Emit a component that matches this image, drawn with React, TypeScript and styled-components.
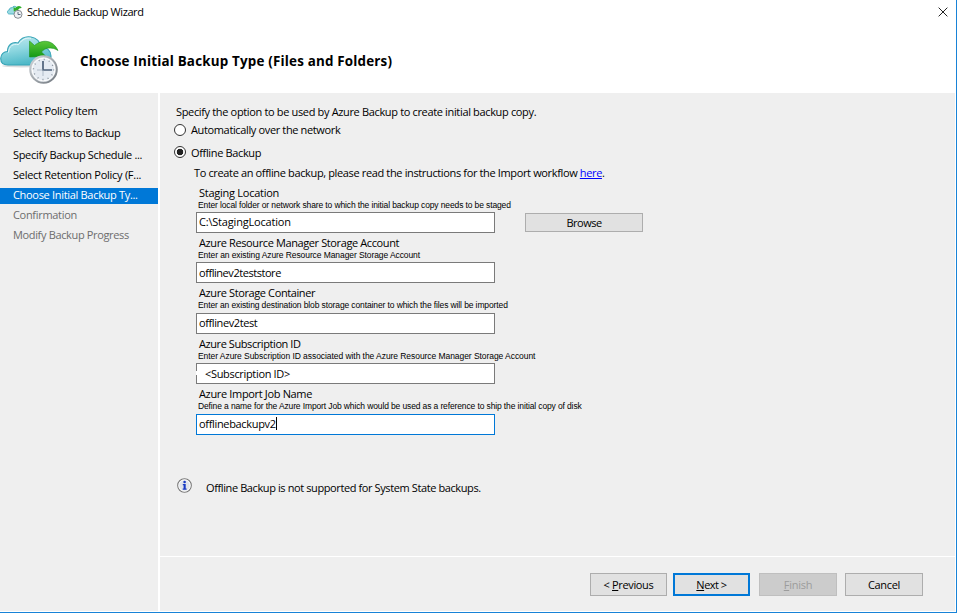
import React from 'react';
import styled, { createGlobalStyle, css } from 'styled-components';

const GlobalStyle = createGlobalStyle`
  * { box-sizing: border-box; }
  body {
    margin: 0;
    background: #fff;
    color: #000;
    font-family: "Open Sans", "Noto Sans", sans-serif;
    font-size: 11px;
    overflow: hidden;
  }
`;

const Window = styled.div`
  width: 957px;
  height: 613px;
  display: flex;
  flex-direction: column;
  background: #fff;
  border-right: 1px solid #1883d7;
  border-bottom: 1px solid #1883d7;
`;

const TitleBar = styled.header`
  height: 26px;
  flex: none;
  display: flex;
  align-items: center;
  padding: 0 8px 2px 7px;
`;

const WindowTitle = styled.span<{ $ls: number }>`
  margin-left: 4px;
  padding-bottom: 1px;
  flex: 1;
  letter-spacing: ${(p) => p.$ls}px;
`;

const Banner = styled.div`
  height: 67px;
  flex: none;
  display: flex;
  align-items: flex-start;
  padding-top: 9px;
`;

const Heading = styled.h1<{ $ls: number }>`
  margin: 16px 0 0 20px;
  font-size: 13.4px;
  line-height: 20px;
  font-weight: 700;
  letter-spacing: ${(p) => p.$ls}px;
`;

const Body = styled.div`
  flex: 1;
  min-height: 0;
  display: flex;
  gap: 2px;
  padding: 0 1px 1px 0;
`;

const Sidebar = styled.nav`
  width: 158px;
  flex: none;
  padding-top: 6px;
  background: #efefef;
`;

const Step = styled.div<{ $h: number; $ls: number; $state?: 'active' | 'pending' }>`
  height: ${(p) => p.$h}px;
  display: flex;
  align-items: center;
  padding-left: 13px;
  white-space: nowrap;
  letter-spacing: ${(p) => p.$ls}px;
  ${(p) => p.$state === 'pending' && css`color: #6d6d6d;`}
  ${(p) => p.$state === 'active' && css`
    margin: 4px 0 0;
    padding-bottom: 3px;
    background: #0078d7;
    color: #fff;
  `}
`;

const Main = styled.main`
  flex: 1;
  display: flex;
  flex-direction: column;
  background: #efefef;
`;

const Content = styled.section`
  height: 464px;
  flex: none;
  padding: 8px 0 0 14px;
  border-bottom: 1px solid #fff;
`;

const Line = styled.div<{ $h: number; $indent?: number; $ls: number }>`
  height: ${(p) => p.$h}px;
  display: flex;
  align-items: center;
  padding-left: ${(p) => p.$indent ?? 0}px;
  white-space: pre;
  letter-spacing: ${(p) => p.$ls}px;
`;

const Radio = styled.span<{ $on?: boolean }>`
  width: 12px;
  height: 12px;
  flex: none;
  margin-right: 5px;
  border: 1px solid #333;
  border-radius: 50%;
  background: ${(p) => (p.$on ? 'radial-gradient(circle, #222 3px, #fff 3.6px)' : '#fff')};
`;

const Link = styled.a`
  color: #0000ff;
  text-decoration: underline;
`;

const Fields = styled.div`
  padding: 6.7px 0 0 22px;
`;

const Field = styled.div`
  height: 50.4px;
`;

const Label = styled.label<{ $ls: number }>`
  display: block;
  padding-left: 3px;
  line-height: 15px;
  letter-spacing: ${(p) => p.$ls}px;
`;

const Hint = styled.div<{ $ls: number }>`
  padding-left: 2px;
  height: 12.3px;
  line-height: 10px;
  font-family: "Liberation Sans", Arial, sans-serif;
  font-size: 8.5px;
  white-space: nowrap;
  letter-spacing: ${(p) => p.$ls}px;
`;

const FieldRow = styled.div`
  display: flex;
  align-items: flex-start;
  gap: 30px;
`;

const TextBox = styled.div<{ $ls: number; $focus?: boolean; $masked?: boolean }>`
  position: relative;
  width: 299px;
  height: 21px;
  display: flex;
  align-items: center;
  padding: 0 0 1px ${(p) => (p.$masked ? 8 : 2)}px;
  background: #fff;
  border: 1px solid ${(p) => (p.$focus ? '#0078d7' : '#7a7a7a')};
  letter-spacing: ${(p) => p.$ls}px;
  ${(p) => p.$masked && css`
    &::before {
      content: '';
      position: absolute;
      left: -1px;
      top: 7px;
      width: 1px;
      height: 4px;
      background: #fff;
    }
  `}
`;

const Caret = styled.span`
  width: 1px;
  height: 13px;
  background: #000;
`;

const Button = styled.button<{ $w: number; $h: number; $ls: number; $primary?: boolean }>`
  width: ${(p) => p.$w}px;
  height: ${(p) => p.$h}px;
  padding: 0;
  font: inherit;
  letter-spacing: ${(p) => p.$ls}px;
  color: #000;
  background: #e1e1e1;
  border: ${(p) => (p.$primary ? '2px solid #0078d7' : '1px solid #adadad')};
  &:disabled {
    color: #9c9c9c;
    background: #cccccc;
    border-color: #bfbfbf;
  }
`;

const BrowseButton = styled(Button)`
  margin-top: 1px;
`;

const Notice = styled.div<{ $ls: number }>`
  display: flex;
  align-items: center;
  gap: 14px;
  height: 20px;
  margin-top: 39px;
  padding-left: 3px;
  letter-spacing: ${(p) => p.$ls}px;
`;

const NoticeText = styled.span`
  padding-top: 3px;
`;

const Footer = styled.footer`
  flex: 1;
  display: flex;
  justify-content: flex-end;
  align-items: flex-start;
  padding: 16px 32px 0 0;
`;

const Buttons = styled.div`
  display: grid;
  grid-template-columns: 83px 86px 86px 78px;
`;

const BackupIcon = ({ w, h, id }: { w: number; h: number; id: string }) => (
  <svg width={w} height={h} viewBox="0 0 60 50" fill="none" preserveAspectRatio="none">
    <defs>
      <linearGradient id={`${id}c`} x1="0" y1="0" x2="0.3" y2="1">
        <stop offset="0" stopColor="#c4eaf0" />
        <stop offset="0.5" stopColor="#8ed7e0" />
        <stop offset="1" stopColor="#4fb9c8" />
      </linearGradient>
      <linearGradient id={`${id}g`} x1="0" y1="0" x2="0" y2="1">
        <stop offset="0" stopColor="#5cc83a" />
        <stop offset="1" stopColor="#159a16" />
      </linearGradient>
      <linearGradient id={`${id}r`} x1="0" y1="0" x2="1" y2="1">
        <stop offset="0" stopColor="#d4d8dc" />
        <stop offset="1" stopColor="#6f767d" />
      </linearGradient>
    </defs>
    <ellipse cx="22" cy="31" rx="20" ry="1.5" fill="#d8dcde" />
    <path
      d="M8 30C3 30 .7 27 .7 23.500C.7 19 4 16.500 7.500 16.500C7.500 10 12 6.500 18 8C21 3 26 1.200 31 2C37 3 40 7 41 12C47 12 51 16 51 21C51 27 47 30 42 30Z"
      fill={`url(#${id}c)`}
      stroke="#35a3b6"
      strokeWidth="1.1"
    />
    <path d="M8.500 17.500C9 11 13 8.500 18.500 9.500C22 4 27 2.500 31 3.300" stroke="#e5f7fa" strokeWidth="1" />
    <path
      d="M29.500 6L34.500 10.500C42 4 53 4.500 58 15.500C52 11.500 44.500 12.500 41.500 17L46 21.500L29.500 22Z"
      fill={`url(#${id}g)`}
      stroke="#1b8f1b"
      strokeWidth="0.6"
    />
    <circle cx="43.500" cy="34.500" r="13.300" fill="#e3e8ed" stroke={`url(#${id}r)`} strokeWidth="2" />
    <circle cx="43.500" cy="34.500" r="11.300" fill="#e5ebf2" stroke="#fff" strokeWidth="1" />
    <circle cx="43.500" cy="34.500" r="10" stroke="#7f8994" strokeWidth="1.400" strokeDasharray="0.9 4.336" />
    <path d="M43 26V35H52" stroke="#4d6179" strokeWidth="1.700" />
    <path d="M43 35V41M37 35H43" stroke="#9aa8b7" strokeWidth="0.700" />
  </svg>
);

/* Simplified drawing of the cloud and clock for the 16px title bar slot. */
const SmallBackupIcon = () => (
  <svg width="16" height="14" viewBox="0 0 16 14" fill="none">
    <path
      d="M2.500 9C1 9 .5 8 .5 7C.5 5.700 1.300 5 2.300 5C2.300 3.300 3.500 2.500 5 2.800C6 1 8.500 .8 9.800 2.500L11 9Z"
      fill="#9bdbe3"
      stroke="#4aafbf"
      strokeWidth="0.9"
    />
    <path d="M6.500 2L8.300 3.200C10.500 .3 13.500 .2 14.800 3C13 2.800 11.800 3.500 11 5L12 6.200L6.800 6.500Z" fill="#2fae2a" />
    <circle cx="11" cy="9.300" r="4" fill="#eef1f4" stroke="#858b91" strokeWidth="1" />
    <path d="M11 6.800V9.500H13.500" stroke="#4d6179" strokeWidth="0.9" />
  </svg>
);

const CloseIcon = () => (
  <svg width="10" height="10" viewBox="0 0 11 11">
    <path d="M.7 .7L10.300 10.300M10.300 .7L.7 10.300" stroke="#222" strokeWidth="1.100" />
  </svg>
);

const InfoIcon = () => (
  <svg width="15" height="15" viewBox="0 0 15 15">
    <circle cx="7.500" cy="7.500" r="6.800" fill="#f5f5f5" stroke="#777" strokeWidth="1.100" />
    <circle cx="7.500" cy="7.500" r="5.600" fill="#dfe3ea" stroke="#fff" strokeWidth="0.700" />
    <circle cx="7.600" cy="4" r="1.300" fill="#1739c4" />
    <path d="M5.800 6.100H8.700V10.500H9.600V11.700H5.700V10.500H6.600V7.200H5.800Z" fill="#1739c4" />
  </svg>
);

interface FieldSpec {
  label: string;
  labelLs: number;
  hint: string;
  hintLs: number;
  value: string;
  valueLs: number;
  masked?: boolean;
  focus?: boolean;
  browse?: boolean;
}

const fields: FieldSpec[] = [
  { label: 'Staging Location', labelLs: -0.26, hint: 'Enter local folder or network share to which the initial backup copy needs to be staged', hintLs: -0.125, value: 'C:\\StagingLocation', valueLs: -0.19, browse: true },
  { label: 'Azure Resource Manager Storage Account', labelLs: -0.39, hint: 'Enter an existing Azure Resource Manager Storage Account', hintLs: -0.085, value: 'offlinev2teststore', valueLs: -0.45 },
  { label: 'Azure Storage Container', labelLs: -0.39, hint: 'Enter an existing destination blob storage container to which the files will be imported', hintLs: -0.115, value: 'offlinev2test', valueLs: -0.4 },
  { label: 'Azure Subscription ID', labelLs: -0.42, hint: 'Enter Azure Subscription ID associated with the Azure Resource Manager Storage Account', hintLs: -0.06, value: '<Subscription ID>', valueLs: -0.33, masked: true },
  { label: 'Azure Import Job Name', labelLs: -0.34, hint: 'Define a name for the Azure Import Job which would be used as a reference to ship the initial copy of disk', hintLs: -0.125, value: 'offlinebackupv2', valueLs: -0.33, focus: true },
];

export default function App() {
  return (
    <>
      <GlobalStyle />
      <Window>
        <TitleBar>
          <SmallBackupIcon />
          <WindowTitle $ls={-0.41}>Schedule Backup Wizard</WindowTitle>
          <CloseIcon />
        </TitleBar>
        <Banner>
          <BackupIcon w={60} h={50} id="l" />
          <Heading $ls={0.19}>Choose Initial Backup Type (Files and Folders)</Heading>
        </Banner>
        <Body>
          <Sidebar>
            <Step $h={22} $ls={-0.26}>Select Policy Item</Step>
            <Step $h={22} $ls={-0.385}>Select Items to Backup</Step>
            <Step $h={22} $ls={-0.32}>Specify Backup Schedule ...</Step>
            <Step $h={19} $ls={-0.27}>Select Retention Policy (F...</Step>
            <Step $h={16} $ls={-0.31} $state="active">Choose Initial Backup Ty...</Step>
            <Step $h={20} $ls={-0.31} $state="pending">Confirmation</Step>
            <Step $h={20} $ls={-0.35} $state="pending">Modify Backup Progress</Step>
          </Sidebar>
          <Main>
            <Content>
              <Line $h={20} $indent={2} $ls={-0.345}>Specify the option to be used by Azure Backup to create initial backup copy.</Line>
              <Line $h={17} $ls={-0.36}><Radio />Automatically over the network</Line>
              <Line $h={28} $ls={-0.35}><Radio $on />Offline Backup</Line>
              <Line $h={12} $indent={20} $ls={-0.36}>To create an offline backup, please read the instructions for the Import workflow <Link>here</Link>.</Line>
              <Fields>
                {fields.map((f) => (
                  <Field key={f.label}>
                    <Label $ls={f.labelLs}>{f.label}</Label>
                    <Hint $ls={f.hintLs}>{f.hint}</Hint>
                    <FieldRow>
                      <TextBox $ls={f.valueLs} $focus={f.focus} $masked={f.masked}>
                        {f.value}
                        {f.focus && <Caret />}
                      </TextBox>
                      {f.browse && <BrowseButton $w={118} $h={19} $ls={-0.5}>Browse</BrowseButton>}
                    </FieldRow>
                  </Field>
                ))}
              </Fields>
              <Notice $ls={-0.395}>
                <InfoIcon />
                <NoticeText>Offline Backup is not supported for System State backups.</NoticeText>
              </Notice>
            </Content>
            <Footer>
              <Buttons>
                <Button $w={77} $h={23} $ls={-0.35}>&lt; <u>P</u>revious</Button>
                <Button $w={77} $h={23} $ls={-0.5} $primary><u>N</u>ext &gt;</Button>
                <Button $w={78} $h={23} $ls={-0.25} disabled><u>F</u>inish</Button>
                <Button $w={78} $h={23} $ls={-0.33}>Cancel</Button>
              </Buttons>
            </Footer>
          </Main>
        </Body>
      </Window>
    </>
  );
}
